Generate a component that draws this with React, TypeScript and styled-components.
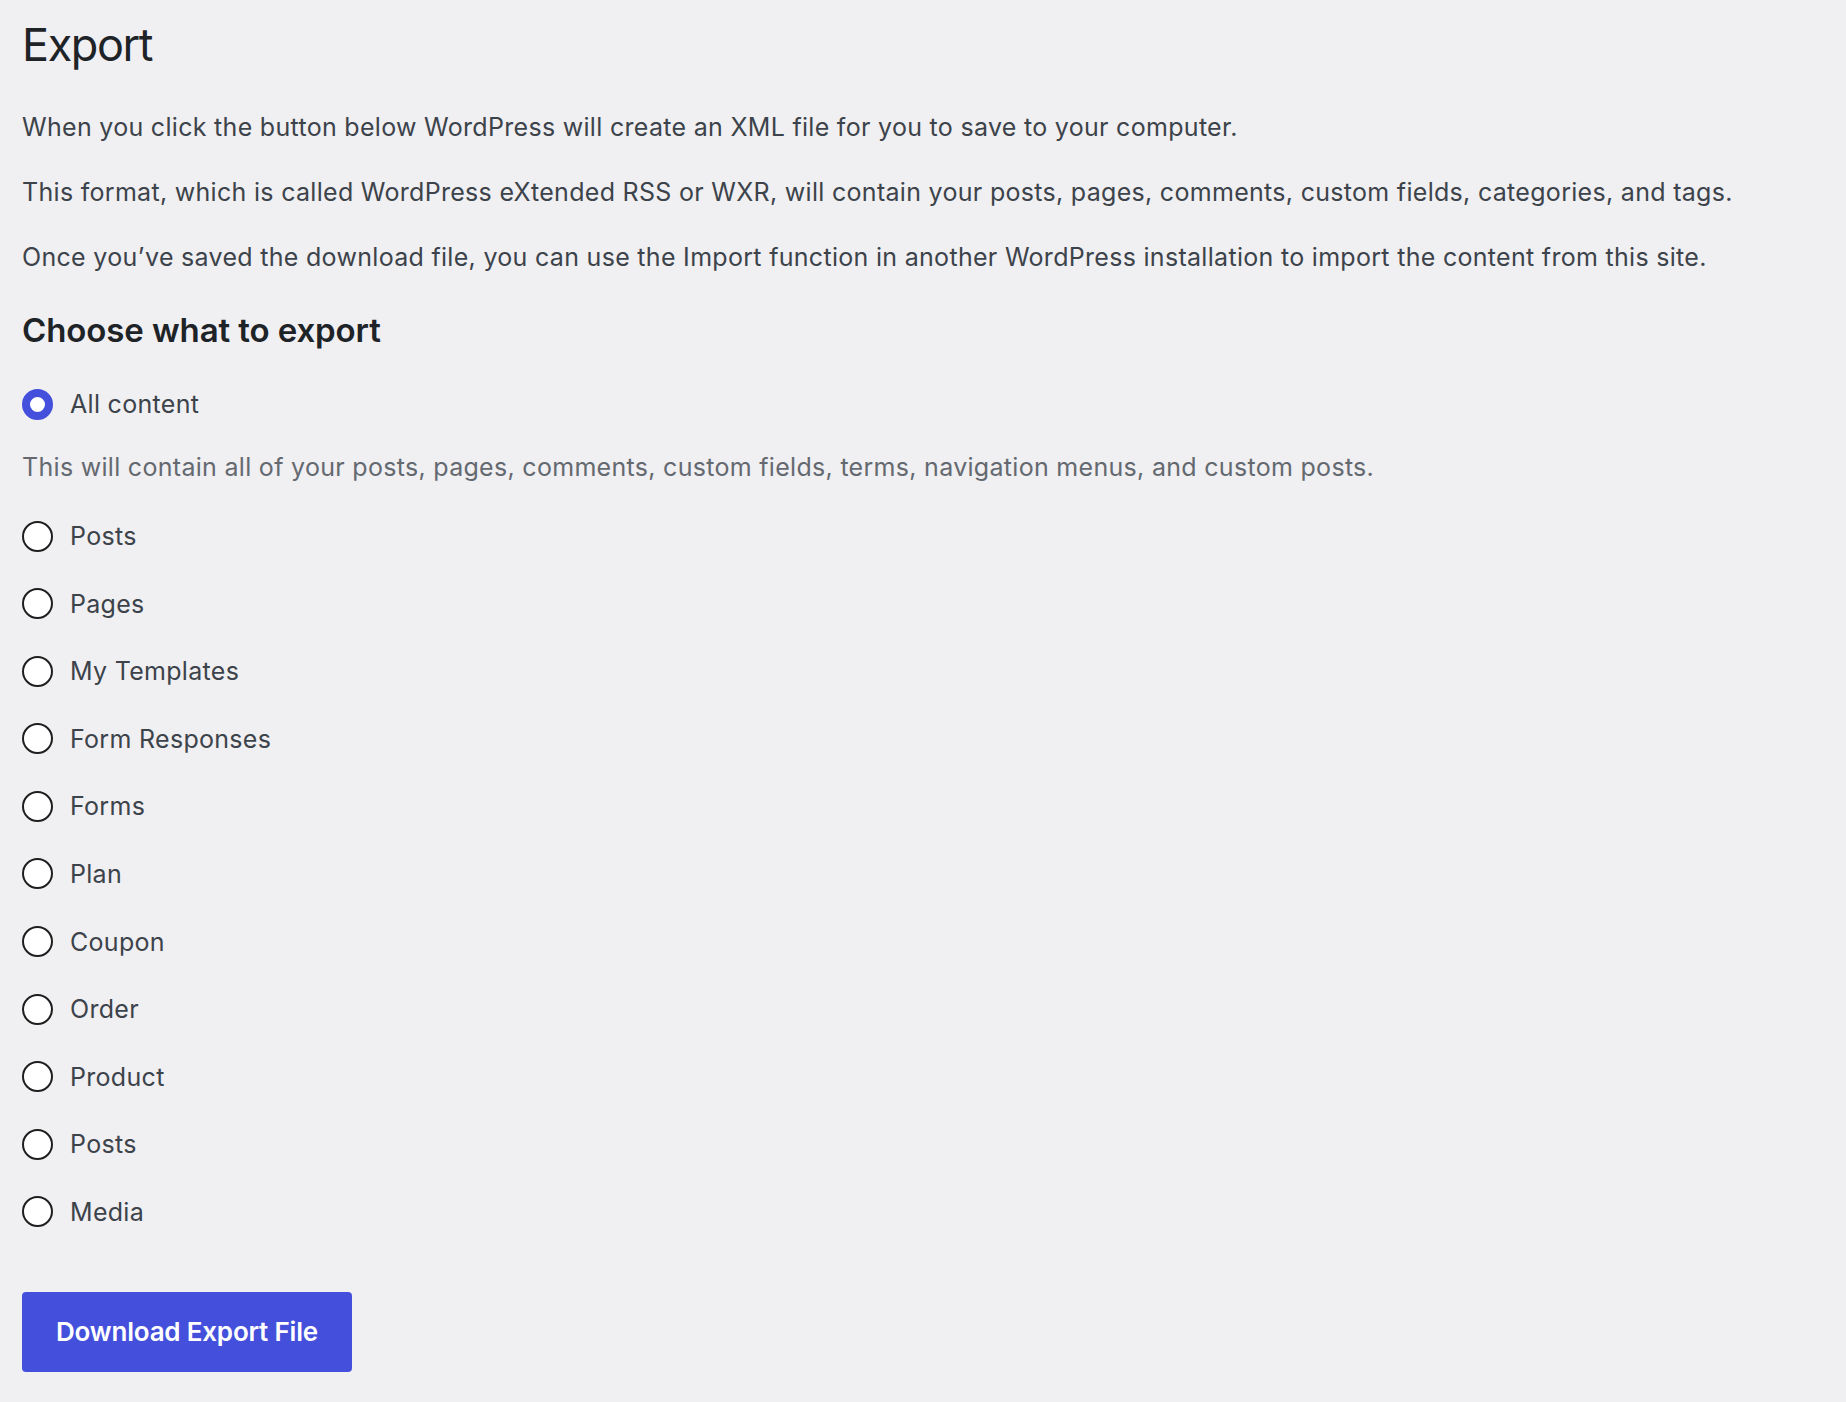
import React from "react";
import styled, { createGlobalStyle } from "styled-components";

const Global = createGlobalStyle`
  html, body { margin: 0; padding: 0; background: #f0eff2; }
  body { font-family: Inter, "Noto Sans", sans-serif; color: #3c434a; }
  * { box-sizing: border-box; }
`;

const Page = styled.div`
  padding: 16px 22px 40px;
  min-height: 1402px;
`;

const Title = styled.h1`
  margin: 0 0 34px;
  font-size: 45px;
  line-height: 58px;
  font-weight: 400;
  letter-spacing: -1.4px;
  color: #1d2327;
`;

const Para = styled.p`
  margin: 0 0 27px;
  font-size: 25px;
  line-height: 38px;
  letter-spacing: 0.3px;
`;

const SubTitle = styled.h2`
  margin: 33px 0 33px;
  font-size: 33px;
  line-height: 42px;
  font-weight: 600;
  letter-spacing: -0.1px;
  color: #1d2327;
`;

const Options = styled.fieldset`
  border: 0;
  margin: 0;
  padding: 0;
  display: flex;
  flex-direction: column;
`;

const Row = styled.label<{ $gapBelow?: number }>`
  display: flex;
  align-items: center;
  gap: 17px;
  height: 40px;
  font-size: 25px;
  letter-spacing: 0.3px;
  margin-bottom: ${(p) => (p.$gapBelow ?? 27.6)}px;
  cursor: pointer;
`;

const Radio = styled.input.attrs({ type: "radio" })`
  appearance: none;
  -webkit-appearance: none;
  margin: 0;
  width: 31px;
  height: 31px;
  border-radius: 50%;
  border: 2px solid #1e1e1e;
  background: #fff;
  flex: none;
  &:checked {
    border: 8px solid #4450dc;
  }
`;

const Description = styled.p`
  margin: 0 0 30px;
  font-size: 25px;
  line-height: 38px;
  letter-spacing: 0.3px;
  color: #646970;
`;

const Button = styled.button`
  margin-top: 32px;
  height: 80px;
  padding: 0 34px;
  border: 0;
  border-radius: 4px;
  background: #4450dc;
  color: #fff;
  font-family: Inter, "Noto Sans", sans-serif;
  font-size: 26px;
  font-weight: 600;
  letter-spacing: -0.2px;
  cursor: pointer;
`;

const items = [
  "Posts",
  "Pages",
  "My Templates",
  "Form Responses",
  "Forms",
  "Plan",
  "Coupon",
  "Order",
  "Product",
  "Posts",
  "Media",
];

export default function App() {
  return (
    <>
      <Global />
      <Page>
        <Title>Export</Title>
        <Para>When you click the button below WordPress will create an XML file for you to save to your computer.</Para>
        <Para>This format, which is called WordPress eXtended RSS or WXR, will contain your posts, pages, comments, custom fields, categories, and tags.</Para>
        <Para>Once you’ve saved the download file, you can use the Import function in another WordPress installation to import the content from this site.</Para>
        <SubTitle>Choose what to export</SubTitle>
        <Options>
          <Row $gapBelow={24}>
            <Radio name="content" defaultChecked />
            All content
          </Row>
          <Description>This will contain all of your posts, pages, comments, custom fields, terms, navigation menus, and custom posts.</Description>
          {items.map((it, i) => (
            <Row key={i}>
              <Radio name="content" />
              {it}
            </Row>
          ))}
        </Options>
        <Button>Download Export File</Button>
      </Page>
    </>
  );
}
